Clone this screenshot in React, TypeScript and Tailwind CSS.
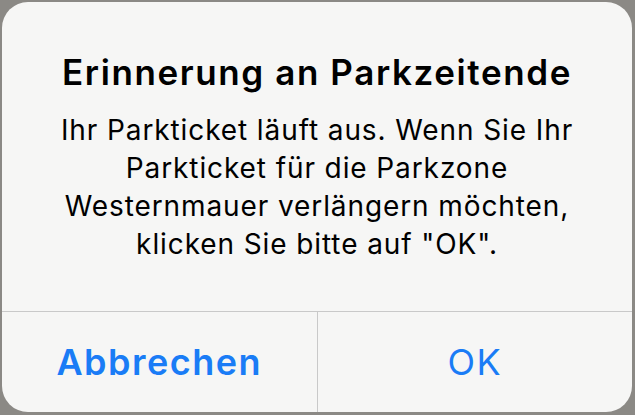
export default function App() {
  return (
    <div className="w-[635px] h-[415px] bg-[#8b8985] pt-[2px] pl-[2px] overflow-hidden" style={{ fontFamily: 'Inter, "Liberation Sans", Arial, sans-serif' }}>
      <div className="w-[630px] h-[410px] rounded-[26px] bg-[#f6f6f5] flex flex-col overflow-hidden">
        <div className="h-[309px] flex flex-col items-center pt-[50px] text-center text-black">
          <h1 className="text-[35px] leading-[40px] font-semibold tracking-[1.6px] whitespace-nowrap">Erinnerung an Parkzeitende</h1>
          <p className="mt-[19px] text-[28px] leading-[38px] tracking-[0.9px] whitespace-nowrap">
            Ihr Parkticket läuft aus. Wenn Sie Ihr<br />
            Parkticket für die Parkzone<br />
            Westernmauer verlängern möchten,<br />
            klicken Sie bitte auf "OK".
          </p>
        </div>
        <div className="flex flex-1 border-t border-[#c9c9c9]">
          <button className="flex-1 flex items-center justify-center text-[#1a7cf6] text-[36px] tracking-[1.5px] font-semibold border-r border-[#c9c9c9]">Abbrechen</button>
          <button className="flex-1 flex items-center justify-center text-[#1a7cf6] text-[36px] tracking-[1.5px]">OK</button>
        </div>
      </div>
    </div>
  );
}
